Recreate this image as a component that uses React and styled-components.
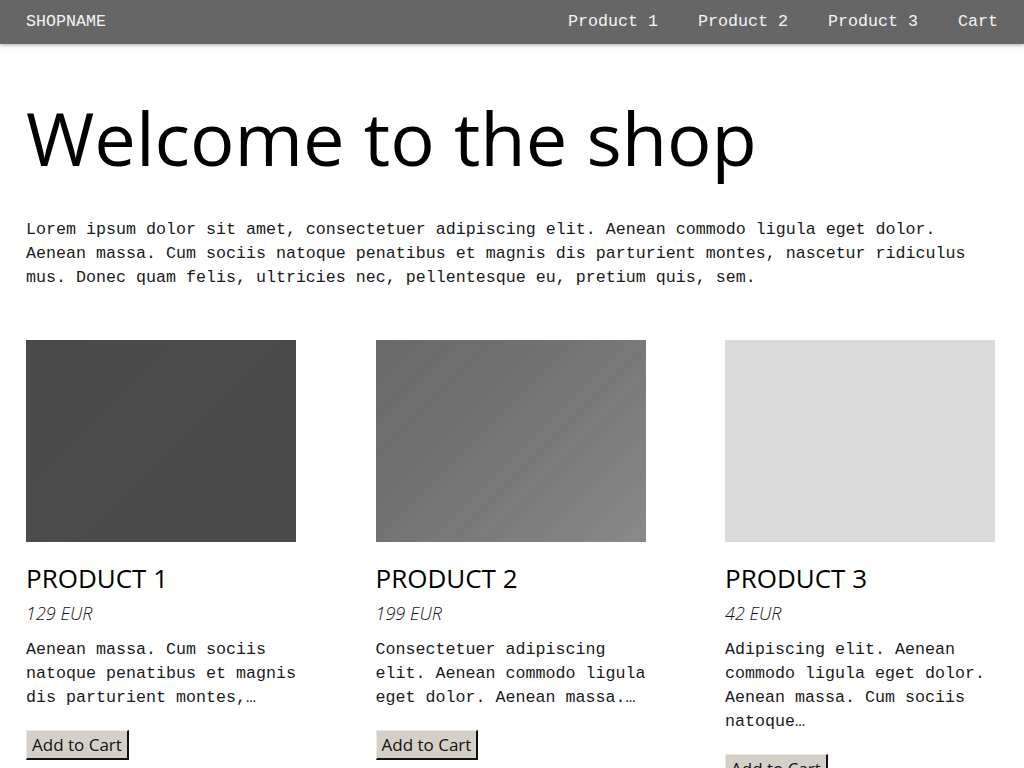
import React from "react";
import styled, { createGlobalStyle } from "styled-components";

const Global = createGlobalStyle`
  html, body { margin: 0; padding: 0; background: #fff; }
  body { font-family: "Liberation Mono", monospace; color: #111; }
`;

const Header = styled.header`
  height: 44px;
  background: #666;
  box-shadow: 0 1px 4px rgba(0, 0, 0, 0.35);
  display: flex;
  align-items: center;
  justify-content: space-between;
  padding: 0 26px;
  position: relative;
  z-index: 1;
`;

const Brand = styled.a`
  font-family: "Liberation Mono", monospace;
  font-size: 16.67px;
  color: #f4f4f4;
  text-decoration: none;
  margin-top: -2px;
`;

const Nav = styled.nav`
  display: flex;
  gap: 40px;
  margin-top: -2px;
`;

const NavLink = styled.a`
  font-family: "Liberation Mono", monospace;
  font-size: 16.67px;
  color: #f4f4f4;
  text-decoration: none;
`;

const Main = styled.main`
  padding: 0 26px;
`;

const Title = styled.h1`
  font-family: "Open Sans", sans-serif;
  font-weight: 400;
  font-size: 74px;
  line-height: 1.2;
  margin: 50px 0 0;
  color: #000;
`;

const Intro = styled.p`
  font-family: "Liberation Mono", monospace;
  font-size: 16.67px;
  line-height: 24px;
  margin: 35px 0 0;
  max-width: 960px;
  color: #1a1a1a;
`;

const Grid = styled.section`
  display: grid;
  width: 969px;
  grid-template-columns: repeat(3, 1fr);
  column-gap: 79.5px;
  margin-top: 50px;
`;

const Card = styled.article`
  display: flex;
  flex-direction: column;
  align-items: flex-start;
`;

const Picture = styled.div`
  width: 100%;
  aspect-ratio: 4 / 3;
  background: ${(p) => p.$bg};
`;

const ProductName = styled.h2`
  font-family: "Open Sans", sans-serif;
  font-weight: 400;
  font-size: 26px;
  line-height: 32px;
  margin: 20px 0 0;
  color: #000;
`;

const Price = styled.p`
  font-family: "Open Sans", sans-serif;
  font-style: italic;
  font-weight: 300;
  font-size: 18px;
  line-height: 24px;
  margin: 7px 0 0;
  color: #111;
`;

const Desc = styled.p`
  font-family: "Liberation Mono", monospace;
  font-size: 16.67px;
  line-height: 24px;
  margin: 13px 0 0;
  color: #1a1a1a;
`;

const CartButton = styled.button`
  font-family: "Open Sans", sans-serif;
  font-size: 17px;
  color: #111;
  background: #d4d0c8;
  border: none;
  border-top: 1px solid #ece9e3;
  border-left: 1px solid #ece9e3;
  border-right: 2px solid #111;
  border-bottom: 2px solid #111;
  height: 30px;
  padding: 0 5px;
  margin-top: 20px;
  cursor: pointer;
`;

const products = [
  {
    name: "PRODUCT 1",
    price: "129 EUR",
    desc: "Aenean massa. Cum sociis natoque penatibus et magnis dis parturient montes,…",
    bg: "linear-gradient(135deg, #4a4a4a 0%, #4b4b4b 45%, #4c4c4c 50%, #4a4a4a 55%, #4a4a4a 100%)",
  },
  {
    name: "PRODUCT 2",
    price: "199 EUR",
    desc: "Consectetuer adipiscing elit. Aenean commodo ligula eget dolor. Aenean massa.…",
    bg: "repeating-linear-gradient(135deg, rgba(255,255,255,0) 0px, rgba(255,255,255,0.02) 14px, rgba(255,255,255,0) 28px), linear-gradient(135deg, #686868 0%, #6f6f6f 35%, #7a7a7a 65%, #888888 100%)",
  },
  {
    name: "PRODUCT 3",
    price: "42 EUR",
    desc: "Adipiscing elit. Aenean commodo ligula eget dolor. Aenean massa. Cum sociis natoque…",
    bg: "#dadada",
  },
];

export default function App() {
  return (
    <>
      <Global />
      <Header>
        <Brand href="#">SHOPNAME</Brand>
        <Nav>
          <NavLink href="#">Product 1</NavLink>
          <NavLink href="#">Product 2</NavLink>
          <NavLink href="#">Product 3</NavLink>
          <NavLink href="#">Cart</NavLink>
        </Nav>
      </Header>
      <Main>
        <Title>Welcome to the shop</Title>
        <Intro>
          Lorem ipsum dolor sit amet, consectetuer adipiscing elit. Aenean commodo ligula eget dolor.
          Aenean massa. Cum sociis natoque penatibus et magnis dis parturient montes, nascetur ridiculus
          mus. Donec quam felis, ultricies nec, pellentesque eu, pretium quis, sem.
        </Intro>
        <Grid>
          {products.map((p) => (
            <Card key={p.name}>
              <Picture $bg={p.bg} />
              <ProductName>{p.name}</ProductName>
              <Price>{p.price}</Price>
              <Desc>{p.desc}</Desc>
              <CartButton>Add to Cart</CartButton>
            </Card>
          ))}
        </Grid>
      </Main>
    </>
  );
}
